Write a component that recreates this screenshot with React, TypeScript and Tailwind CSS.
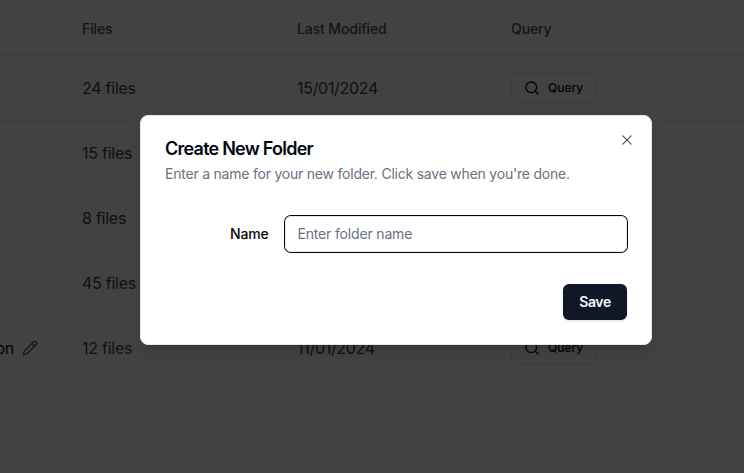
import { Pencil, Search } from "lucide-react";

const rows = [
  { name: "Marketing", files: 24, modified: "15/01/2024" },
  { name: "Finance", files: 15, modified: "14/01/2024" },
  { name: "Legal", files: 8, modified: "13/01/2024" },
  { name: "Research", files: 45, modified: "12/01/2024" },
  { name: "Documentation", files: 12, modified: "11/01/2024" },
];

const columns = "grid grid-cols-[66px_215px_214px_249px]";

function Cross() {
  return (
    <svg viewBox="0 0 15 15" fill="currentColor" className="size-4">
      <path
        fillRule="evenodd"
        clipRule="evenodd"
        d="M11.7816 4.03157C12.0062 3.80702 12.0062 3.44295 11.7816 3.2184C11.5571 2.99385 11.193 2.99385 10.9685 3.2184L7.50005 6.68682L4.03164 3.2184C3.80708 2.99385 3.44301 2.99385 3.21846 3.2184C2.99391 3.44295 2.99391 3.80702 3.21846 4.03157L6.68688 7.49999L3.21846 10.9684C2.99391 11.193 2.99391 11.557 3.21846 11.7816C3.44301 12.0061 3.80708 12.0061 4.03164 11.7816L7.50005 8.31316L10.9685 11.7816C11.193 12.0061 11.5571 12.0061 11.7816 11.7816C12.0062 11.557 12.0062 11.193 11.7816 10.9684L8.31322 7.49999L11.7816 4.03157Z"
      />
    </svg>
  );
}

function FolderTable() {
  return (
    <div className="h-full bg-white">
      <div className={`${columns} h-14 items-center border-b border-gray-200 pt-0.5 text-sm font-medium tracking-[-0.11px] text-slate-600`}>
        <div />
        <div className="px-4">Files</div>
        <div className="px-4">Last Modified</div>
        <div className="px-4">Query</div>
      </div>
      {rows.map((row, i) => (
        <div key={row.name} className={`${columns} h-[65px] items-center border-b border-gray-200 text-base tracking-[-0.25px] text-slate-700`}>
          <div className="flex items-center justify-end gap-2 overflow-hidden pr-7">
            {i === rows.length - 1 && (
              <>
                <span className="text-gray-950">on</span>
                <Pencil className="size-4 shrink-0 text-slate-600" />
              </>
            )}
          </div>
          <div className="px-4">{row.files} files</div>
          <div className="px-4 tracking-[-0.3px]">{row.modified}</div>
          <div className="px-4">
            <button className="flex h-8 items-center gap-2 rounded-md border border-gray-200 px-3 text-xs font-medium tracking-normal text-gray-950">
              <Search className="size-4" />
              Query
            </button>
          </div>
        </div>
      ))}
    </div>
  );
}

export default function App() {
  return (
    <div className="relative h-[473px] w-[744px] overflow-hidden font-['Inter',sans-serif]">
      <FolderTable />
      <div className="absolute inset-0 bg-black/74" />
      <div
        role="dialog"
        className="absolute top-[115px] left-[140px] grid w-[512px] gap-4 rounded-lg border border-gray-200 bg-white p-6 text-gray-950 shadow-lg"
      >
        <div className="flex flex-col gap-1.5">
          <h2 className="text-lg leading-none font-semibold tracking-[-0.76px]">Create New Folder</h2>
          <p className="text-sm tracking-[-0.22px] text-gray-500">Enter a name for your new folder. Click save when you're done.</p>
        </div>
        <div className="grid grid-cols-4 items-center gap-4 py-4">
          <label className="text-right text-sm leading-none font-medium tracking-[-0.2px]">Name</label>
          <input
            placeholder="Enter folder name"
            className="col-span-3 h-9 w-full rounded-md border border-gray-200 px-3 pb-0.5 text-sm tracking-[-0.17px] ring-1 ring-gray-950 outline-none placeholder:text-gray-500"
          />
        </div>
        <div className="flex justify-end">
          <button className="h-9 w-16 rounded-md bg-gray-900 text-sm font-semibold tracking-[-0.4px] text-gray-50 shadow-sm">Save</button>
        </div>
        <button aria-label="Close" className="absolute top-4 right-4 opacity-70">
          <Cross />
        </button>
      </div>
    </div>
  );
}
